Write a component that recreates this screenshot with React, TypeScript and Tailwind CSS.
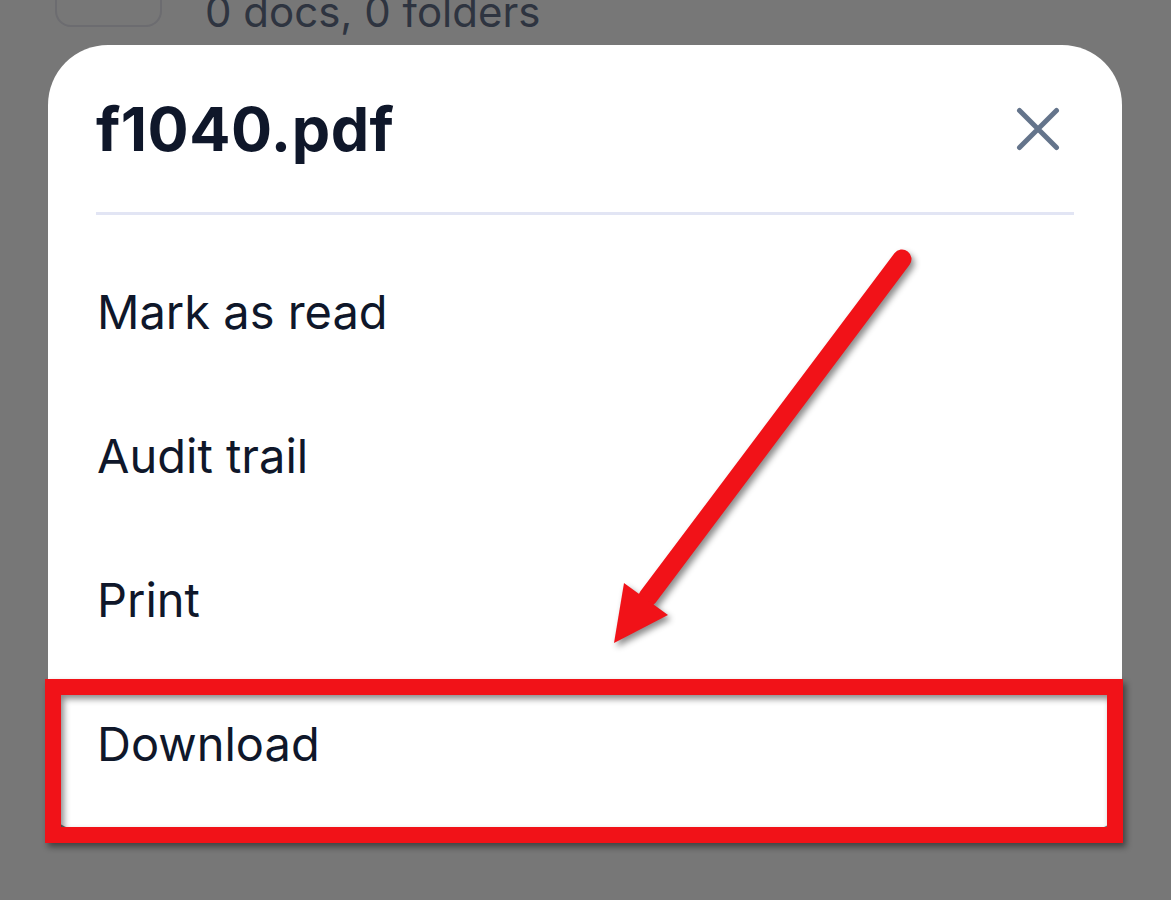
import React from "react";

const items = ["Mark as read", "Audit trail", "Print", "Download"];

export default function App() {
  return (
    <div
      className="relative w-[1171px] h-[900px] overflow-hidden bg-[#777777]"
      style={{ fontFamily: "Inter, 'Noto Sans', sans-serif" }}
    >
      {/* partially visible row above */}
      <div className="flex items-end -mt-[33px] h-[60px] pl-[55px]">
        <div className="w-[107px] h-[60px] rounded-[16px] border-2 border-[#6c6c70]" />
        <div className="ml-[43px] text-[42px] leading-none text-[#2e3440] -mb-[6px]">
          0 docs, 0 folders
        </div>
      </div>

      {/* modal */}
      <div className="mt-[18px] ml-[48px] w-[1074px] h-[784px] bg-white rounded-t-[60px] rounded-b-[28px] pt-[39px]">
        <div className="flex items-center justify-between h-[90px] pl-[48px] pr-[62px]">
          <div className="text-[61px] font-bold text-[#0f172a] tracking-[0.5px] leading-none">
            f1040.pdf
          </div>
          <svg width="44" height="44" viewBox="0 0 44 44">
            <path
              d="M3.5 3.5 L40.5 40.5 M40.5 3.5 L3.5 40.5"
              stroke="#64748b"
              strokeWidth="5"
              strokeLinecap="round"
            />
          </svg>
        </div>
        <div className="mt-[38px] mx-[48px] h-[3px] bg-[#e2e5f4]" />
        <div className="mt-[24px] flex flex-col">
          {items.map((t) => (
            <div
              key={t}
              className="h-[144px] flex items-center pl-[49px] text-[47px] text-[#0f172a] leading-none"
            >
              {t}
            </div>
          ))}
        </div>
      </div>

      {/* annotation: red box */}
      <div className="absolute left-[45px] top-[679px] w-[1078px] h-[164px] border-[16px] border-[#f11218] [filter:drop-shadow(3px_4px_3px_rgba(0,0,0,0.45))]" />

      {/* annotation: arrow */}
      <svg
        className="absolute left-0 top-0 [filter:drop-shadow(3px_4px_3px_rgba(0,0,0,0.45))]"
        width="1171"
        height="900"
        viewBox="0 0 1171 900"
      >
        <line
          x1="902"
          y1="259"
          x2="648"
          y2="597"
          stroke="#f11218"
          strokeWidth="19"
          strokeLinecap="round"
        />
        <polygon points="624,583 668,615 614,643" fill="#f11218" />
      </svg>
    </div>
  );
}
